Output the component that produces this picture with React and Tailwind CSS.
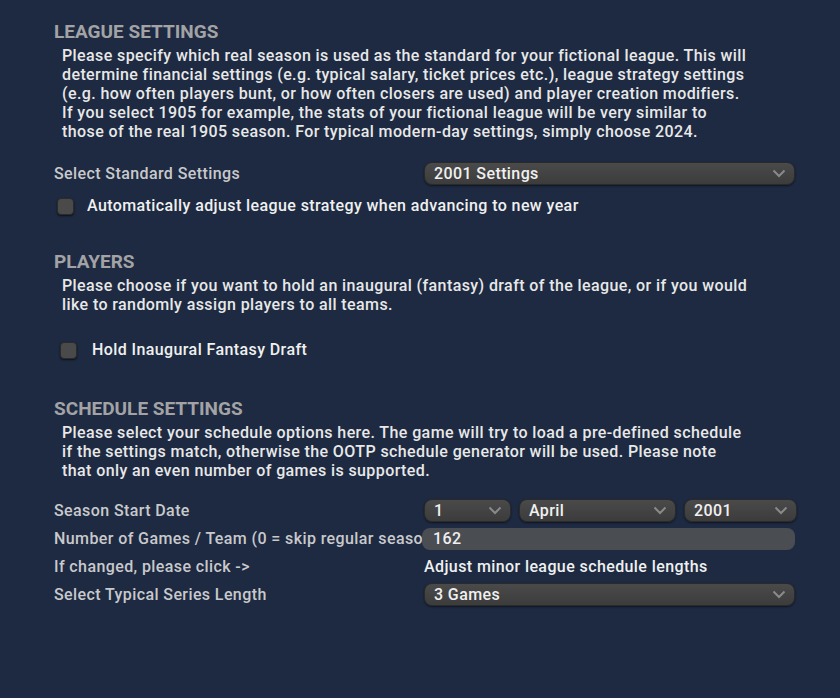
import React from "react";

const Chevron = () => (
  <svg width="14" height="9" viewBox="0 0 14 9" className="shrink-0">
    <path d="M1.5 1.5 L7 7 L12.5 1.5" fill="none" stroke="#8a8a8a" strokeWidth="2" />
  </svg>
);

const Select = ({ value, className = "" }) => (
  <div
    className={
      "flex h-[23px] items-center justify-between rounded-[8px] border border-[#2a2a2a] bg-gradient-to-b from-[#4a4a4a] to-[#3c3c3c] pl-[9px] pr-[8px] text-[16px] font-medium tracking-[0.4px] text-[#f0f0f0] shadow-[0_1px_2px_rgba(0,0,0,0.5)] " +
      className
    }
  >
    <span>{value}</span>
    <Chevron />
  </div>
);

const Checkbox = () => (
  <div className="h-[17px] w-[17px] shrink-0 rounded-[4px] border border-[#2b2b2b] bg-[#4a4a4a] shadow-[0_1px_2px_rgba(0,0,0,0.6)]" />
);

const Heading = ({ children }) => (
  <h2 className="text-[19px] font-bold leading-[20px] text-[#a3a3a6]">{children}</h2>
);

const Para = ({ lines }) => (
  <p className="ml-[8px] mt-[4px] whitespace-nowrap text-[16px] font-medium leading-[19px] tracking-[0.4px] text-[#e8e8e8]">
    {lines.map((l, i) => (
      <React.Fragment key={i}>
        {l}
        {i < lines.length - 1 && <br />}
      </React.Fragment>
    ))}
  </p>
);

const Row = ({ label, children, className = "" }) => (
  <div className={"flex h-[23px] items-center " + className}>
    <div className="w-[368px] shrink-0 overflow-hidden whitespace-nowrap text-[16px] font-medium tracking-[0.4px] text-[#c9c9cc]">{label}</div>
    <div className="flex w-[373px] items-center">{children}</div>
  </div>
);

export default function App() {
  return (
    <div
      className="h-[698px] w-[840px] overflow-hidden bg-[#1d2a41] pl-[54px] pt-[22px]"
      style={{ fontFamily: "Roboto, 'Noto Sans', sans-serif" }}
    >
      <Heading>LEAGUE SETTINGS</Heading>
      <Para
        lines={[
          "Please specify which real season is used as the standard for your fictional league. This will",
          "determine financial settings (e.g. typical salary, ticket prices etc.), league strategy settings",
          "(e.g. how often players bunt, or how often closers are used) and player creation modifiers.",
          "If you select 1905 for example, the stats of your fictional league will be very similar to",
          "those of the real 1905 season. For typical modern-day settings, simply choose 2024.",
        ]}
      />

      <Row label="Select Standard Settings" className="mt-[21px]">
        <Select value="2001 Settings" className="ml-[2px] w-[371px]" />
      </Row>
      <div className="mt-[9px] flex items-center gap-[13px] pl-[3px] text-[16px] font-medium tracking-[0.4px] text-[#f0f0f0]">
        <Checkbox />
        <span>Automatically adjust league strategy when advancing to new year</span>
      </div>

      <div className="mt-[34px]">
        <Heading>PLAYERS</Heading>
      </div>
      <Para
        lines={[
          "Please choose if you want to hold an inaugural (fantasy) draft of the league, or if you would",
          "like to randomly assign players to all teams.",
        ]}
      />
      <div className="mt-[24px] flex items-center gap-[15px] pl-[6px] text-[16px] font-medium tracking-[0.4px] text-[#f0f0f0]">
        <Checkbox />
        <span>Hold Inaugural Fantasy Draft</span>
      </div>

      <div className="mt-[37px]">
        <Heading>SCHEDULE SETTINGS</Heading>
      </div>
      <Para
        lines={[
          "Please select your schedule options here. The game will try to load a pre-defined schedule",
          "if the settings match, otherwise the OOTP schedule generator will be used. Please note",
          "that only an even number of games is supported.",
        ]}
      />

      <div className="mt-[19px] flex flex-col gap-[5px]">
        <Row label="Season Start Date">
          <div className="ml-[2px] flex gap-[8px]">
            <Select value="1" className="w-[87px]" />
            <Select value="April" className="w-[157px]" />
            <Select value="2001" className="w-[113px]" />
          </div>
        </Row>
        <Row label="Number of Games / Team (0 = skip regular season)">
          <div className="flex h-[22px] w-[375px] items-center rounded-[8px] bg-[#4a4d52] pl-[11px] text-[16px] font-medium tracking-[0.4px] text-[#f0f0f0]">
            162
          </div>
        </Row>
        <Row label="If changed, please click ->">
          <span className="ml-[2px] text-[16px] font-medium tracking-[0.4px] text-[#f0f0f0]">Adjust minor league schedule lengths</span>
        </Row>
        <Row label="Select Typical Series Length">
          <Select value="3 Games" className="ml-[2px] w-[371px]" />
        </Row>
      </div>
    </div>
  );
}
